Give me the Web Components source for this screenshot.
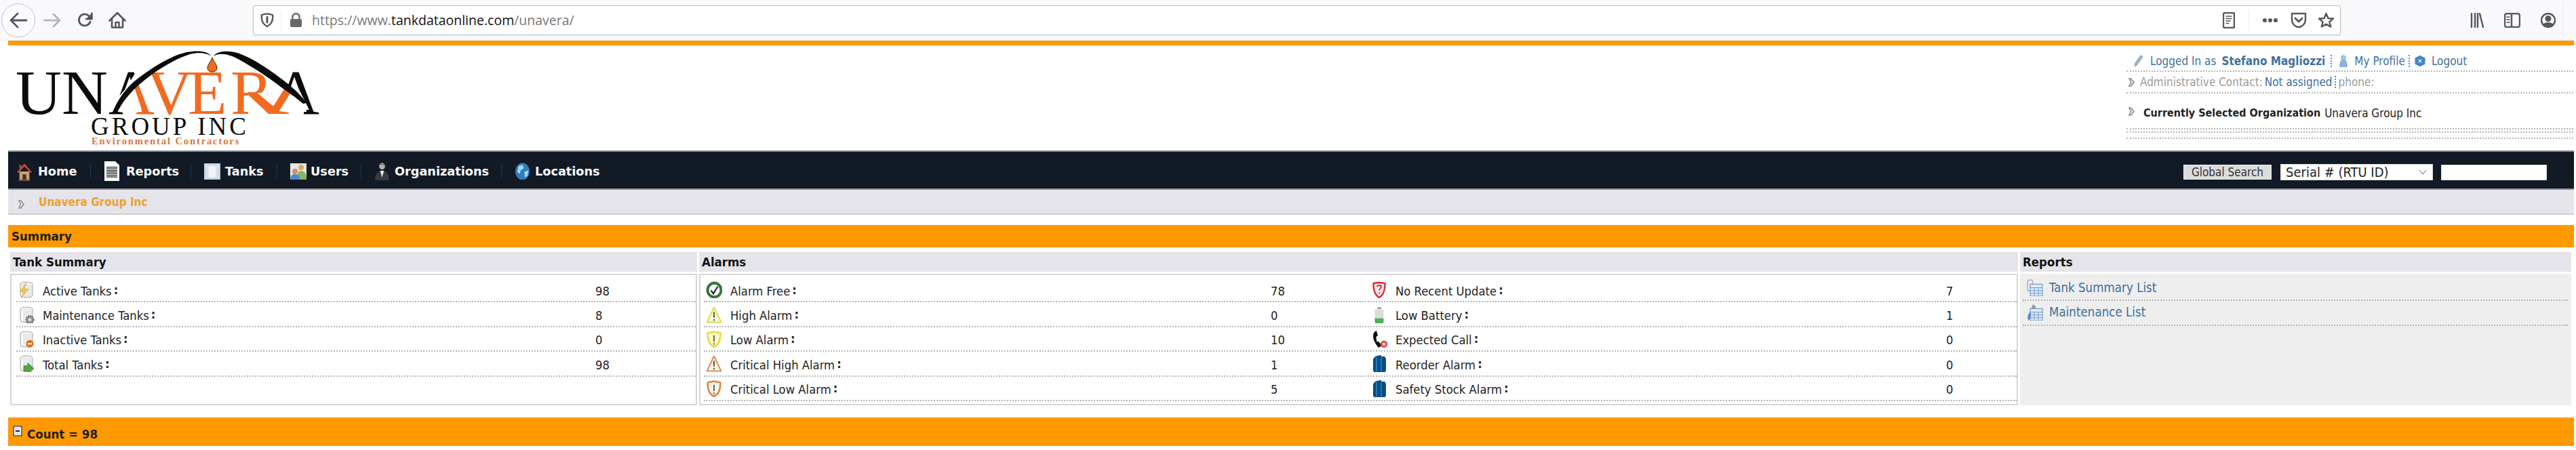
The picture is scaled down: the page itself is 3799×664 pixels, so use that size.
<!DOCTYPE html>
<html lang="en"><head><meta charset="utf-8"><title>Unavera</title>
<style>
html,body{margin:0;padding:0;background:#fff;height:664px;overflow:hidden}
body{font-family:"DejaVu Sans Condensed","DejaVu Sans",sans-serif;font-stretch:condensed;font-size:18.3px;color:#222}
</style></head><body>
<ff-toolbar></ff-toolbar>
<app-page>
  <top-header></top-header>
  <main-nav>
    <nav-item icon="home" w="128" g="9">Home</nav-item>
    <nav-item icon="reports" w="148" g="9">Reports</nav-item>
    <nav-item icon="tanks" w="127" g="7">Tanks</nav-item>
    <nav-item icon="users" w="124" g="6">Users</nav-item>
    <nav-item icon="org" w="207" g="7">Organizations</nav-item>
    <nav-item icon="globe" w="150" g="7" last>Locations</nav-item>
  </main-nav>
  <crumb-bar>Unavera Group Inc</crumb-bar>
  <section-bar>Summary</section-bar>
  <panel-grid>
    <info-panel heading="Tank Summary" style="--cols:854px 143px;--pl:7px">
      <stat-row><stat-label icon="t-active">Active Tanks</stat-label><stat-value>98</stat-value></stat-row>
      <stat-row><stat-label icon="t-maint">Maintenance Tanks</stat-label><stat-value>8</stat-value></stat-row>
      <stat-row><stat-label icon="t-inactive">Inactive Tanks</stat-label><stat-value>0</stat-value></stat-row>
      <stat-row><stat-label icon="t-total">Total Tanks</stat-label><stat-value>98</stat-value></stat-row>
    </info-panel>
    <info-panel heading="Alarms" style="--cols:836px 145px 851px 101px;--pl:5px">
      <stat-row><stat-label icon="a-free">Alarm Free</stat-label><stat-value>78</stat-value><stat-label icon="a-recent">No Recent Update</stat-label><stat-value>7</stat-value></stat-row>
      <stat-row><stat-label icon="a-high">High Alarm</stat-label><stat-value>0</stat-value><stat-label icon="a-batt">Low Battery</stat-label><stat-value>1</stat-value></stat-row>
      <stat-row><stat-label icon="a-low">Low Alarm</stat-label><stat-value>10</stat-value><stat-label icon="a-call">Expected Call</stat-label><stat-value>0</stat-value></stat-row>
      <stat-row><stat-label icon="a-chigh">Critical High Alarm</stat-label><stat-value>1</stat-value><stat-label icon="a-blue">Reorder Alarm</stat-label><stat-value>0</stat-value></stat-row>
      <stat-row><stat-label icon="a-clow">Critical Low Alarm</stat-label><stat-value>5</stat-value><stat-label icon="a-blue">Safety Stock Alarm</stat-label><stat-value>0</stat-value></stat-row>
    </info-panel>
    <report-panel heading="Reports">
      <report-link icon="r-sum">Tank Summary List</report-link>
      <report-link icon="r-maint">Maintenance List</report-link>
    </report-panel>
  </panel-grid>
  <count-bar>Count = 98</count-bar>
</app-page>
<script>
const CYL=(c='#e8eaee')=>`<ellipse cx="12" cy="4" rx="9" ry="3" fill="#f4f4f4" stroke="#aaa"/><path d="M3 4v16c0 4 18 4 18 0V4" fill="${c}" stroke="#aaa"/><path d="M5.5 6v14" stroke="#fff" stroke-width="2"/>`;
const TBL=`<rect x="5" y="7" width="18" height="17" fill="#dfeaf7" stroke="#5b8cc4"/><path d="M5 12h18M5 16h18M5 20h18M11 12v12M17 12v12" stroke="#6f9fd6"/>`;
const TRI=(f,s)=>`<path d="M12 1.5 22.5 22.5H1.5Z" fill="${f}" stroke="${s}" stroke-width="2" stroke-linejoin="round"/><path d="M12 8v8M12 18v2.4" stroke="#444" stroke-width="1.8"/>`;
const SHD=(f,s)=>`<path d="M2.5 3.5C8 1.5 16 1.5 21.5 3.5 21.5 12 19 20 12 23 5 20 2.5 12 2.5 3.5Z" fill="${f}" stroke="${s}" stroke-width="2.4"/><path d="M12 6.5v9M12 17.5v2.5" stroke="#555" stroke-width="1.8"/>`;
const ICONS={
 home:`<path d="M4 13h16v12H4Z" fill="#c9a376"/><path d="M0 14 12 2l12 12-2 1L12 6 2 15Z" fill="#b5562a"/><path d="M4 4h3v5H4Z" fill="#b5562a"/><path d="M9 17h6v8H9Z" fill="#4b3322"/><path d="M3 24h18v2H3Z" fill="#6b5440"/>`,
 reports:`<path d="M1 1h16l6 6v24H1Z" fill="#fff"/><path d="M4 10h16M4 12.5h16M4 15h16M4 17.5h16M4 20h16M4 22.5h16M4 25h16" stroke="#222" stroke-width="1.3"/>`,
 tanks:`<rect width="24" height="24" fill="#c3d0df"/><rect x="2" y="2" width="20" height="20" fill="#d7e0ea"/><path d="M6 6c0-3 12-3 12 0v13c0 3-12 3-12 0Z" fill="#f2f3f5" stroke="#dde"/>`,
 users:`<rect width="24" height="24" fill="#e6e6e2"/><circle cx="16" cy="6" r="4" fill="#e2a55f"/><path d="M10 24c0-10 2-13 6-13s8 3 8 13Z" fill="#83b85a"/><circle cx="7" cy="12" r="4" fill="#d88a62"/><path d="M0 24c0-6 3-8 7-8s7 2 7 8Z" fill="#4a8ad0"/>`,
 org:`<circle cx="12" cy="5" r="4.5" fill="#b9b0a8"/><path d="M1 25c0-10 4-14 11-14s11 4 11 14Z" fill="#3a3a3e"/><path d="M9 11h6l-3 9Z" fill="#eee"/><path d="M8 2.5h8M12 9v2" stroke="#555"/>`,
 globe:`<ellipse cx="12" cy="12.5" rx="11" ry="12" fill="#2f7fbe"/><path d="M6 5l6-2 2 5-5 3-1 5-4-3Zm9 8 6-2-1 7-4 3Z" fill="#a9d5ee"/>`,
 chev:`<path d="M2 1h3l5 5.5L5 12H2l3-5.5Z" fill="#e4e4e4" stroke="#888" stroke-width="1.5"/>`,
 't-active':`${CYL()}<path d="M12 1 2 15h6l-4 9 11-13H9Z" fill="#f2c64a" stroke="#e0a830" stroke-width=".6"/>`,
 't-maint':`${CYL()}<circle cx="17" cy="19" r="5.5" fill="#9a9a9a" stroke="#666" stroke-dasharray="2 1.2" stroke-width="2"/><circle cx="17" cy="19" r="2" fill="#eee"/>`,
 't-inactive':`${CYL()}<circle cx="17" cy="18.5" r="5.5" fill="#e5701e"/><path d="M14 18.5h6" stroke="#fff" stroke-width="2"/>`,
 't-total':`${CYL()}<path d="M8 15h6v-4l9 8-9 8v-4H8Z" fill="#4fa83d" stroke="#2f7d28" stroke-width=".7"/>`,
 'a-free':`<circle cx="12.5" cy="12.5" r="10" fill="#fff" stroke="#35783a" stroke-width="4"/><path d="M7.5 13l3.5 4.5L17.5 7.5" fill="none" stroke="#1f2a44" stroke-width="2.2"/>`,
 'a-high':TRI('#fbfbd8','#dcdc55'),'a-low':SHD('#fdfdc8','#e3de2c'),
 'a-chigh':TRI('#fdf4ea','#dd9158'),'a-clow':SHD('#fdf2e4','#d9834a'),
 'a-recent':`<path d="M3.5 3C8 1.5 16 1.5 20.5 3 21 12 18 20 12 23 6 20 3 12 3.5 3Z" fill="#fde4e4" stroke="#d9293a" stroke-width="2.4"/><path d="M9 8c0-3 6-3 6 0 0 2-3 2-3 5M12 15.5v2" fill="none" stroke="#c33" stroke-width="1.8"/>`,
 'a-batt':`<path d="M9 1h6v3H9Z" fill="#aaa"/><rect x="5.5" y="4" width="13" height="20" rx="2" fill="#d9dcd9"/><path d="M5.5 17h13v5q0 2-2 2h-9q-2 0-2-2Z" fill="#4fae5c"/>`,
 'a-call':`<path d="M6 1C1 5 2 14 11 24l5-3-5-6-2 1c-1-3-2-6-1-8l2-1-2-7Z" fill="#111"/><circle cx="19" cy="19" r="5" fill="#e0433a"/><path d="M17 17l4 4M21 17l-4 4" stroke="#fff" stroke-width="1.4"/>`,
 'a-blue':`<path d="M5 3c2-2 8-3 10-3v2h3c3 0 4 2 4 5v14c0 2-1 3-3 3H6c-2 0-3-1-3-3V7c0-2 1-3 2-4Z" fill="#0a4d84"/><path d="M8 3v20M15 3v20" stroke="#1e7cb8" stroke-width="2"/>`,
 'r-sum':`<rect x="1" y="1" width="8" height="16" rx="3" fill="#e9e9e9" stroke="#999"/>${TBL}`,
 'r-maint':`<path d="M9 1l4 2v4l3 2-3 3-6-1-1 8-3 3c-2-3-1-8 2-11Z" fill="#9a9ea3"/>${TBL}<path d="M3 14l-2 6 2 4 3-4V13Z" fill="#5b8cc4"/>`,
 pencil:`<path d="M15 1l5 3L8 21l-5 3 .5-6Z" fill="#9db9cf" stroke="#667" stroke-width=".8"/>`,
 person:`<circle cx="12" cy="6" r="5" fill="#a9c7ea" stroke="#6d97c9"/><path d="M4 23c0-10 3-13 8-13s8 3 8 13c-4 2-12 2-16 0Z" fill="#8cb4e3" stroke="#6d97c9"/>`,
 logout:`<path d="M12 1l10 5v12l-10 5-10-5V6Z" fill="#3f86cf"/><path d="M9 9l6 6M15 9l-6 6" stroke="#e8f2fb" stroke-width="1.6"/>`,
 minus:`<rect x="1" y="1" width="12" height="14" fill="#dfe8f2" stroke="#223"/><path d="M4 8h6" stroke="#223" stroke-width="2"/>`
};
function def(tag,html){
  const C=class extends HTMLElement{
    constructor(){super();this.attachShadow({mode:'open'});}
    connectedCallback(){this.shadowRoot.innerHTML=typeof html==='function'?html(this):html;}
  };
  customElements.define(tag,C);
}
def('x-icon',el=>{
  const w=el.getAttribute('w')||24,h=el.getAttribute('h')||24,n=el.getAttribute('name');
  return `<style>:host{display:block;flex:none;width:${w}px;height:${h}px}svg{display:block;width:100%;height:100%}</style><svg viewBox="0 0 ${n==='chev'?'12 13':n==='minus'?'14 16':`24 ${n==='reports'?32:n==='home'?26:24}`}" preserveAspectRatio="none">${ICONS[n]}</svg>`;
});
const TS=`fill="none" stroke="#56565a" stroke-width="2.4" stroke-linecap="round" stroke-linejoin="round"`;
def('ff-toolbar',`<style>
:host{display:flex;align-items:center;height:60px;background:#f9f9fb;box-sizing:border-box;border-bottom:1px solid #ececee}
svg{display:block;flex:none}
.back{width:50px;height:50px;border:1px solid #c2c0c6;border-radius:50%;margin-left:2px;display:flex;align-items:center;justify-content:center;background:#fbfbfd;flex:none;box-sizing:border-box}
.nv{display:flex;gap:23px;margin-left:12px;align-items:center}
.url{margin-left:187px;width:3079px;height:44px;box-sizing:border-box;background:#fff;border:1px solid #bdbdc0;border-radius:3px;display:flex;align-items:center;box-shadow:0 1px 2px #0001;flex:none}
.url .sep{width:1px;height:30px;background:#ececee;flex:none}
.addr{font:19.5px "Open Sans",sans-serif;color:#77777a;margin-left:14px;white-space:nowrap;flex:1}
.addr b{font-weight:400;color:#111}
.acc{display:flex;gap:30px;margin-left:191px;align-items:center}
.end{width:1px;height:52px;background:#ececee;margin-left:10px;flex:none}
</style>
<div class="back"><svg width="28" height="28" viewBox="0 0 28 28" ${TS}><path d="M26 14H3M13 4 3 14l10 10" stroke-width="2.8"/></svg></div>
<div class="nv">
<svg width="26" height="26" viewBox="0 0 26 26" fill="none" stroke="#b1b1b3" stroke-width="2.6" stroke-linecap="round" stroke-linejoin="round"><path d="M1 13h23M15 4l9 9-9 9"/></svg>
<svg width="24" height="24" viewBox="0 0 24 24" ${TS}><path d="M20 14a8.5 8.5 0 1 1-2-8.5L22 9" stroke-width="2.8"/><path d="M22.5 1.5V10H14" stroke-width="2.6" fill="#56565a"/></svg>
<svg width="26" height="26" viewBox="0 0 26 26" ${TS}><path d="M1.5 13.5 13 2l11.5 11.5M5 11v12.5h16V11" stroke-width="2.6"/><path d="M10.5 23v-7h5v7"/></svg>
</div>
<div class="url">
<svg style="margin-left:10px" width="20" height="22" viewBox="0 0 20 22" ${TS}><path d="M2 3c5-2 11-2 16 0 1 8-2 14-8 17C4 17 1 11 2 3Z"/><path d="M10 6v8" stroke-width="3"/></svg>
<div class="sep" style="margin-left:10px"></div>
<svg style="margin-left:12px" width="19" height="22" viewBox="0 0 19 22" fill="#69696c"><path d="M4.5 9V6a5 5 0 0 1 10 0v3" fill="none" stroke="#69696c" stroke-width="2.4"/><rect x="1" y="9" width="17" height="12" rx="2"/></svg>
<div class="addr">https://www.<b>tankdataonline.com</b>/unavera/</div>
<svg width="18" height="24" viewBox="0 0 18 24" ${TS}><rect x="1" y="1" width="16" height="22" rx="2"/><path d="M5 6h8M5 9.5h8M5 13h6M5 16.5h4" stroke-width="1.5"/></svg>
<div class="sep" style="margin-left:20px"></div>
<svg style="margin-left:19px" width="24" height="8" viewBox="0 0 24 8" fill="#56565a"><circle cx="4" cy="4" r="3"/><circle cx="12" cy="4" r="3"/><circle cx="20" cy="4" r="3"/></svg>
<svg style="margin-left:18px" width="24" height="24" viewBox="0 0 24 24" ${TS}><path d="M2 2h20v9c0 6-5 11-10 11S2 17 2 11Z"/><path d="M7 9l5 5 5-5" stroke-width="2.8"/></svg>
<svg style="margin-left:16px;margin-right:8px" width="25" height="24" viewBox="0 0 25 24" ${TS}><path d="M12.5 2l3 7 7.5.5-5.7 4.8 1.9 7.2-6.7-3.9-6.7 3.900 1.900-7.200L2 9.500 9.500 9Z"/></svg>
</div>
<div class="acc">
<svg width="20" height="22" viewBox="0 0 20 22" ${TS} stroke-linecap="butt"><path d="M2 1v20M7 1v20M11 1v20M14 1l5 20"/></svg>
<svg width="24" height="22" viewBox="0 0 24 22" ${TS}><rect x="1" y="1" width="22" height="20" rx="3"/><path d="M11 1v20"/><path d="M4 6h4M4 10h4M4 14h4" stroke-width="1.6"/></svg>
<svg width="22" height="22" viewBox="0 0 22 22" ${TS}><circle cx="11" cy="11" r="10"/><circle cx="11" cy="8.5" r="4.5" fill="#56565a" stroke="none"/><path d="M3.500 17c2-4 13-4 15 0-3 4-12 4-15 0Z" fill="#56565a" stroke="none"/></svg>
</div>
<div class="end"></div>`);
def('app-page',`<style>:host{display:block;margin:0 3px 0 12px;border-top:7px solid #f90}</style><slot></slot>`);
def('unavera-logo',`<style>:host{display:block;flex:none;width:470px;height:155px}svg{display:block}
text{font-family:"Liberation Serif",serif}</style>
<svg width="470" height="155" viewBox="12 67 470 155">
<defs>
<clipPath id="a1o"><path d="M198 128 240 95V172H196V162H209Z"/></clipPath>
<clipPath id="a1k"><path d="M150 100H204L186 130 160 160H185V172H150Z"/></clipPath>
<clipPath id="rc"><path d="M335 100H400V137H366V172H335Z"/></clipPath>
<clipPath id="a2k"><path d="M420 100H480V172H448V162H456L441 132 420 132Z"/></clipPath>
</defs>
<g font-size="94">
<text x="23" y="168" fill="#0b0b0b">UN</text>
<text x="160" y="168" fill="#0b0b0b" clip-path="url(#a1k)">A</text>
<text x="160" y="168" fill="#f26a21" clip-path="url(#a1o)">A</text>
<g fill="#f26a21">
<text x="216" y="168">V</text>
<text x="277" y="168">E</text>
<text x="340" y="168" clip-path="url(#rc)">R</text>
</g>
<path d="M366 136H378L412 164 426 166V168H396L364 138Z" fill="#f26a21"/>
<text x="403" y="168" fill="#0b0b0b" clip-path="url(#a2k)">A</text>
</g>
<path d="M420 130 431 133 409 168H396Z" fill="#f26a21"/>
<path d="M312 83C306 75 292 74 275 77 250 83 222 101 198 120 183 133 172 150 165 168H172C180 150 192 137 204 126 225 107 255 88 280 80 292 77 305 78 312 83Z" fill="#0b0b0b"/>
<path d="M315 83C320 75 335 74 350 78 372 85 400 104 425 124 437 134 445 142 452 152L447 153C435 143 425 136 415 129 392 111 365 94 345 84 333 79 322 78 315 83Z" fill="#0b0b0b"/>
<path d="M313 85C316 92 320 96 320 100 320 104 317 106 313 106 309 106 306 104 306 100 306 96 310 92 313 85Z" fill="#f26a21" stroke="#3a1a08"/>
<text x="134" y="199" font-size="37" letter-spacing="4" fill="#0b0b0b">GROUP INC</text>
<text x="135" y="213" font-size="14.5" font-weight="700" letter-spacing="1.9" fill="#d9763c">Environmental Contractors</text>
</svg>`);
const DOT='border-bottom:2px dotted #b5b5b5';
def('top-header',`<style>
:host{display:flex;height:155px;justify-content:space-between;font-size:17px}
.r{width:659px;margin-right:1px;flex:none}
.l{box-sizing:border-box;${DOT};display:flex;align-items:center;white-space:nowrap}
.l1{height:39px;padding:8px 0 0 10px;color:#3f6f9f}
.l2{height:32px;padding-left:2px;color:#9a9a9a}
.l3{height:53px;padding:6px 0 0 2px;color:#222}
.l4{height:5px}.l5{height:9px}
a{color:inherit;text-decoration:none}
b{font-weight:700}
i{font-style:normal;border-left:2px dotted #5c8cbc;height:18px;margin:0 6px 0 8px}
</style><unavera-logo></unavera-logo><div class="r">
<div class="l l1"><x-icon name="pencil" w="17" h="17"></x-icon><a style="margin-left:8px">Logged In as</a><a style="margin-left:8px"><b>Stefano Magliozzi</b></a><i></i><x-icon name="person" w="16" h="18" style="margin-left:3px"></x-icon><a style="margin-left:8px">My Profile</a><i style="margin-left:5px"></i><x-icon name="logout" w="18" h="18"></x-icon><a style="margin-left:8px">Logout</a></div>
<div class="l l2"><x-icon name="chev" w="11" h="13"></x-icon><span style="margin-left:7px">Administrative Contact:</span><a style="color:#3f6f9f;margin-left:3px">Not assigned</a><i style="margin:0 4px 0 3px"></i><span>phone:</span></div>
<div class="l l3"><x-icon name="chev" w="11" h="13" style="margin-top:-4px"></x-icon><b style="margin-left:12px;font-size:16px">Currently Selected Organization</b><span style="margin-left:6px">Unavera Group Inc</span></div>
<div class="l l4"></div><div class="l l5"></div>
</div>`);
def('main-nav',`<style>
:host{display:flex;align-items:center;height:58px;box-sizing:border-box;background:#121a26;border-top:2px solid #8a8d93;border-bottom:2px solid #8a8d93;padding:3px 0 0 13px;font-weight:700}
.s{margin-left:auto;display:flex;align-items:center;margin-right:40px;margin-top:3px;font-weight:400}
button{width:130px;height:22px;padding:0;border:1px solid #eee;background:#dcdcdc;color:#333;font:inherit;font-size:17px;white-space:nowrap}
.sel{width:225px;height:24px;margin-left:13px;background:#fff;box-sizing:border-box;padding-left:7px;display:flex;align-items:center;justify-content:space-between;font-size:20px;color:#222;border:1px solid #ddd}
.inp{width:156px;height:23px;margin-left:12px;background:#fff;border:1px solid #ddd;box-sizing:border-box}
</style><slot></slot><div class="s"><button>Global Search</button><div class="sel"><span>Serial # (RTU ID)</span><svg width="12" height="8" viewBox="0 0 12 8" style="margin-right:8px" fill="none" stroke="#555"><path d="M1 1l5 6 5-6"/></svg></div><div class="inp"></div></div>`);
const NAVDIM={home:[22,28],reports:[24,31],tanks:[24,24],users:[24,24],org:[23,26],globe:[23,25]};
def('nav-item',el=>{
  const n=el.getAttribute('icon'),[w,h]=NAVDIM[n];
  return `<style>:host{display:flex;align-items:center;flex:none;box-sizing:border-box;width:${el.getAttribute('w')}px;color:#fff;font:700 17.7px "DejaVu Sans",sans-serif;white-space:nowrap}
  .s{flex:none;width:1px;height:20px;background:#2b3340;margin-left:auto;margin-right:19px;${el.hasAttribute('last')?'display:none':''}}</style>
  <x-icon name="${n}" w="${w}" h="${h}" style="margin-right:${el.getAttribute('g')}px"></x-icon><slot></slot><span class="s"></span>`;
});
def('crumb-bar',`<style>:host{display:flex;align-items:center;height:37px;box-sizing:border-box;background:#e4e4ea;border-bottom:2px solid #cfcfd3;padding:1px 0 0 14px;color:#f0a02e;font-weight:700;font-size:17px}</style><x-icon name="chev" w="11" h="13" style="margin-top:6px"></x-icon><span style="margin-left:20px"><slot></slot></span>`);
def('section-bar',`<style>:host{display:flex;align-items:center;height:33px;margin-top:15px;background:#f90;padding:0 0 0 5px;font-weight:700;font-size:18.5px;color:#1d1d1d;box-sizing:border-box}</style><slot></slot>`);
def('panel-grid',`<style>:host{display:grid;grid-template-columns:1013px 1945px 813px;column-gap:3px;margin:7px 0 0 3px;width:3778px;height:226px}</style><slot></slot>`);
const HD=`.h{height:29px;background:#e4e4ea;display:flex;align-items:center;padding-left:4px;font-weight:700;font-size:18.5px;color:#111;box-sizing:border-box}`;
def('info-panel',el=>`<style>:host{display:flex;flex-direction:column;min-width:0}${HD}
.b{margin-top:3px;flex:1;border:2px solid #d6d6d6;padding:4px 0 0 var(--pl);box-sizing:border-box;background:#fff}</style>
<div class="h">${el.getAttribute('heading')}</div><div class="b"><slot></slot></div>`);
def('report-panel',el=>`<style>:host{display:flex;flex-direction:column;min-width:0}${HD}
.b{margin-top:3px;flex:1;background:#eee;padding:4px 5px 0 4px;box-sizing:border-box}</style>
<div class="h">${el.getAttribute('heading')}</div><div class="b"><slot></slot></div>`);
def('stat-row',`<style>:host{display:grid;grid-template-columns:var(--cols);height:36.4px;box-sizing:border-box;${DOT};align-items:center;padding-top:4px}</style><slot></slot>`);
def('stat-label',el=>`<style>:host{display:flex;align-items:center;white-space:nowrap;color:#222;padding-left:3px}x-icon{margin-top:-3px}span{margin-left:12px}i{font-style:normal;margin-left:3px;display:inline-block;font-weight:700;transform:translateY(-2px)}</style><x-icon name="${el.getAttribute('icon')}" w="24" h="25"></x-icon><span><slot></slot><i>:</i></span>`);
def('stat-value',`<style>:host{display:block;color:#222}</style><slot></slot>`);
def('report-link',el=>`<style>:host{display:flex;align-items:center;height:36.4px;box-sizing:border-box;${DOT};color:#41709f;font-size:18.6px;padding:0 0 2px 6px;white-space:nowrap}span{margin-left:9px}</style><x-icon name="${el.getAttribute('icon')}" w="24" h="25"></x-icon><span><slot></slot></span>`);
def('count-bar',`<style>:host{display:flex;height:42px;margin-top:18px;background:#f90;padding:12px 0 0 7px;box-sizing:border-box;font-weight:700;font-size:18.5px;color:#1d1d1d;align-items:flex-start}span{margin:2px 0 0 7px}</style><x-icon name="minus" w="14" h="16"></x-icon><span><slot></slot></span>`);
</script>
</body></html>
